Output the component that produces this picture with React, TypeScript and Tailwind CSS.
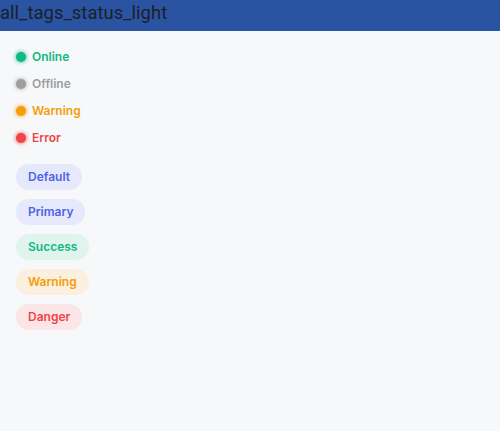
const statuses = [
  { label: "Online", dot: "bg-[#10b981] shadow-[0_0_4px_#10b981]", text: "text-[#10b981]" },
  { label: "Offline", dot: "bg-[#9e9e9e] shadow-[0_0_4px_#9e9e9e]", text: "text-[#9e9e9e]" },
  { label: "Warning", dot: "bg-[#f59e0b] shadow-[0_0_4px_#f59e0b]", text: "text-[#f59e0b]" },
  { label: "Error", dot: "bg-[#ef4444] shadow-[0_0_4px_#ef4444]", text: "text-[#ef4444]" },
];

const tags = [
  { label: "Default", cls: "bg-[#e6e9fb] text-[#4f63e7]" },
  { label: "Primary", cls: "bg-[#e6e9fb] text-[#4f63e7]" },
  { label: "Success", cls: "bg-[#e0f4ee] text-[#10b981]" },
  { label: "Warning", cls: "bg-[#fbefdf] text-[#f59e0b]" },
  { label: "Danger", cls: "bg-[#fbe5e6] text-[#ef4444]" },
];

const App = () => {
  return (
    <div className="min-h-[431px] w-[500px] bg-[#f7f8fa] font-['Inter',sans-serif]">
      <div className="h-[31px] bg-[#2a54a1] flex items-center">
        <h1 className="text-[18.5px] leading-none text-[#1b1f2a] font-['Roboto',sans-serif] pb-[4px]">
          all_tags_status_light
        </h1>
      </div>

      <div className="px-4 pt-[18px] flex flex-col gap-[11px]">
        {statuses.map((s) => (
          <div key={s.label} className="flex items-center gap-[6px] h-4">
            <span className={`w-[10px] h-[10px] rounded-full ${s.dot}`}></span>
            <span className={`text-[12px] font-semibold ${s.text}`}>{s.label}</span>
          </div>
        ))}
      </div>

      <div className="px-4 pt-[18px] flex flex-col items-start gap-[9px]">
        {tags.map((t) => (
          <span
            key={t.label}
            className={`h-[26px] px-3 rounded-full flex items-center text-[12px] font-semibold ${t.cls}`}
          >
            {t.label}
          </span>
        ))}
      </div>
    </div>
  );
};

export default App;
